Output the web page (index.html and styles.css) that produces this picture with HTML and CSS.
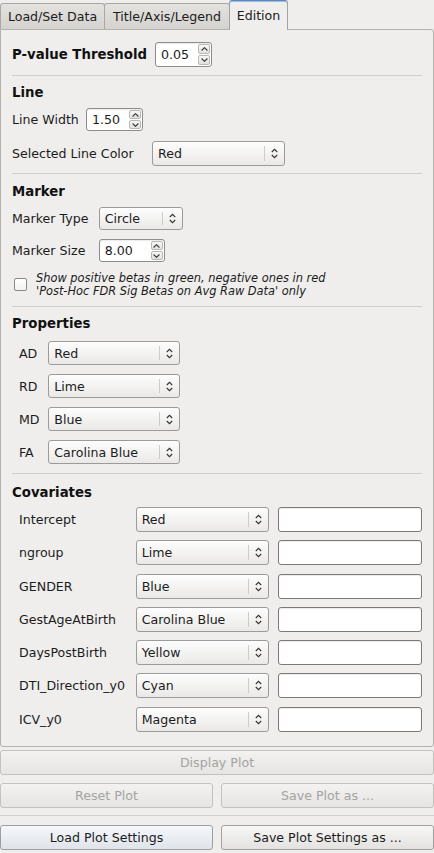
FILE: index.html
```html
<!DOCTYPE html>
<html>
<head>
<meta charset="utf-8">
<link rel="stylesheet" href="styles.css">
</head>
<body>
<div class="tabbar">
  <div class="tab tab-load">Load/Set Data</div>
  <div class="tab tab-title">Title/Axis/Legend</div>
  <div class="tab tab-edition active">Edition</div>
</div>
<div class="pane">
  <div class="row row-pval">
    <span class="bold lbl-pval">P-value Threshold</span>
    <div class="spin spin-pval">
      <span class="spin-text">0.05</span>
      <span class="spin-btns">
        <span class="spin-btn"><svg width="7" height="4" viewBox="0 0 7 4"><path d="M0.6 3.5 L3.5 0.7 L6.4 3.5" fill="none" stroke="#333" stroke-width="1.1"/></svg></span>
        <span class="spin-btn"><svg width="7" height="4" viewBox="0 0 7 4"><path d="M0.6 0.5 L3.5 3.3 L6.4 0.5" fill="none" stroke="#333" stroke-width="1.1"/></svg></span>
      </span>
    </div>
  </div>
  <div class="sep sep-a"></div>

  <div class="bold title title-line">Line</div>
  <div class="row row-lw">
    <span class="lbl lbl-lw">Line Width</span>
    <div class="spin spin-lw">
      <span class="spin-text">1.50</span>
      <span class="spin-btns">
        <span class="spin-btn"><svg width="7" height="4" viewBox="0 0 7 4"><path d="M0.6 3.5 L3.5 0.7 L6.4 3.5" fill="none" stroke="#333" stroke-width="1.1"/></svg></span>
        <span class="spin-btn"><svg width="7" height="4" viewBox="0 0 7 4"><path d="M0.6 0.5 L3.5 3.3 L6.4 0.5" fill="none" stroke="#333" stroke-width="1.1"/></svg></span>
      </span>
    </div>
  </div>
  <div class="row row-slc">
    <span class="lbl lbl-slc">Selected Line Color</span>
    <div class="combo combo-slc"><span class="combo-text">Red</span><span class="combo-arrow"><svg width="7" height="11" viewBox="0 0 7 11"><path d="M0.8 4 L3.5 1.3 L6.2 4 M0.8 7 L3.5 9.7 L6.2 7" fill="none" stroke="#333" stroke-width="1.1"/></svg></span></div>
  </div>
  <div class="sep sep-b"></div>

  <div class="bold title title-marker">Marker</div>
  <div class="row row-mt">
    <span class="lbl lbl-marker">Marker Type</span>
    <div class="combo combo-mt"><span class="combo-text">Circle</span><span class="combo-arrow"><svg width="7" height="11" viewBox="0 0 7 11"><path d="M0.8 4 L3.5 1.3 L6.2 4 M0.8 7 L3.5 9.7 L6.2 7" fill="none" stroke="#333" stroke-width="1.1"/></svg></span></div>
  </div>
  <div class="row row-ms">
    <span class="lbl lbl-marker">Marker Size</span>
    <div class="spin spin-ms">
      <span class="spin-text">8.00</span>
      <span class="spin-btns">
        <span class="spin-btn"><svg width="7" height="4" viewBox="0 0 7 4"><path d="M0.6 3.5 L3.5 0.7 L6.4 3.5" fill="none" stroke="#333" stroke-width="1.1"/></svg></span>
        <span class="spin-btn"><svg width="7" height="4" viewBox="0 0 7 4"><path d="M0.6 0.5 L3.5 3.3 L6.4 0.5" fill="none" stroke="#333" stroke-width="1.1"/></svg></span>
      </span>
    </div>
  </div>
  <div class="check-row">
    <span class="checkbox"></span>
    <div class="check-text">Show positive betas in green, negative ones in red<br>'Post-Hoc FDR Sig Betas on Avg Raw Data' only</div>
  </div>
  <div class="sep sep-c"></div>

  <div class="bold title title-props">Properties</div>
  <div class="prop-list">
    <div class="row prop-row"><span class="lbl lbl-prop">AD</span><div class="combo combo-prop"><span class="combo-text">Red</span><span class="combo-arrow"><svg width="7" height="11" viewBox="0 0 7 11"><path d="M0.8 4 L3.5 1.3 L6.2 4 M0.8 7 L3.5 9.7 L6.2 7" fill="none" stroke="#333" stroke-width="1.1"/></svg></span></div></div>
    <div class="row prop-row"><span class="lbl lbl-prop">RD</span><div class="combo combo-prop"><span class="combo-text">Lime</span><span class="combo-arrow"><svg width="7" height="11" viewBox="0 0 7 11"><path d="M0.8 4 L3.5 1.3 L6.2 4 M0.8 7 L3.5 9.7 L6.2 7" fill="none" stroke="#333" stroke-width="1.1"/></svg></span></div></div>
    <div class="row prop-row"><span class="lbl lbl-prop">MD</span><div class="combo combo-prop"><span class="combo-text">Blue</span><span class="combo-arrow"><svg width="7" height="11" viewBox="0 0 7 11"><path d="M0.8 4 L3.5 1.3 L6.2 4 M0.8 7 L3.5 9.7 L6.2 7" fill="none" stroke="#333" stroke-width="1.1"/></svg></span></div></div>
    <div class="row prop-row"><span class="lbl lbl-prop">FA</span><div class="combo combo-prop"><span class="combo-text">Carolina Blue</span><span class="combo-arrow"><svg width="7" height="11" viewBox="0 0 7 11"><path d="M0.8 4 L3.5 1.3 L6.2 4 M0.8 7 L3.5 9.7 L6.2 7" fill="none" stroke="#333" stroke-width="1.1"/></svg></span></div></div>
  </div>
  <div class="sep sep-d"></div>

  <div class="bold title title-cov">Covariates</div>
  <div class="cov-list">
    <div class="row cov-row"><span class="lbl lbl-cov">Intercept</span><div class="combo combo-cov"><span class="combo-text">Red</span><span class="combo-arrow"><svg width="7" height="11" viewBox="0 0 7 11"><path d="M0.8 4 L3.5 1.3 L6.2 4 M0.8 7 L3.5 9.7 L6.2 7" fill="none" stroke="#333" stroke-width="1.1"/></svg></span></div><div class="lineedit"></div></div>
    <div class="row cov-row"><span class="lbl lbl-cov">ngroup</span><div class="combo combo-cov"><span class="combo-text">Lime</span><span class="combo-arrow"><svg width="7" height="11" viewBox="0 0 7 11"><path d="M0.8 4 L3.5 1.3 L6.2 4 M0.8 7 L3.5 9.7 L6.2 7" fill="none" stroke="#333" stroke-width="1.1"/></svg></span></div><div class="lineedit"></div></div>
    <div class="row cov-row"><span class="lbl lbl-cov">GENDER</span><div class="combo combo-cov"><span class="combo-text">Blue</span><span class="combo-arrow"><svg width="7" height="11" viewBox="0 0 7 11"><path d="M0.8 4 L3.5 1.3 L6.2 4 M0.8 7 L3.5 9.7 L6.2 7" fill="none" stroke="#333" stroke-width="1.1"/></svg></span></div><div class="lineedit"></div></div>
    <div class="row cov-row"><span class="lbl lbl-cov">GestAgeAtBirth</span><div class="combo combo-cov"><span class="combo-text">Carolina Blue</span><span class="combo-arrow"><svg width="7" height="11" viewBox="0 0 7 11"><path d="M0.8 4 L3.5 1.3 L6.2 4 M0.8 7 L3.5 9.7 L6.2 7" fill="none" stroke="#333" stroke-width="1.1"/></svg></span></div><div class="lineedit"></div></div>
    <div class="row cov-row"><span class="lbl lbl-cov">DaysPostBirth</span><div class="combo combo-cov"><span class="combo-text">Yellow</span><span class="combo-arrow"><svg width="7" height="11" viewBox="0 0 7 11"><path d="M0.8 4 L3.5 1.3 L6.2 4 M0.8 7 L3.5 9.7 L6.2 7" fill="none" stroke="#333" stroke-width="1.1"/></svg></span></div><div class="lineedit"></div></div>
    <div class="row cov-row"><span class="lbl lbl-cov">DTI_Direction_y0</span><div class="combo combo-cov"><span class="combo-text">Cyan</span><span class="combo-arrow"><svg width="7" height="11" viewBox="0 0 7 11"><path d="M0.8 4 L3.5 1.3 L6.2 4 M0.8 7 L3.5 9.7 L6.2 7" fill="none" stroke="#333" stroke-width="1.1"/></svg></span></div><div class="lineedit"></div></div>
    <div class="row cov-row"><span class="lbl lbl-cov">ICV_y0</span><div class="combo combo-cov"><span class="combo-text">Magenta</span><span class="combo-arrow"><svg width="7" height="11" viewBox="0 0 7 11"><path d="M0.8 4 L3.5 1.3 L6.2 4 M0.8 7 L3.5 9.7 L6.2 7" fill="none" stroke="#333" stroke-width="1.1"/></svg></span></div><div class="lineedit"></div></div>
  </div>
</div>

<div class="actions">
  <div class="btn disabled btn-display">Display Plot</div>
  <div class="btn-pair pair-plot">
    <div class="btn disabled">Reset Plot</div>
    <div class="btn disabled">Save Plot as ...</div>
  </div>
  <div class="hsep"></div>
  <div class="btn-pair pair-settings">
    <div class="btn focus">Load Plot Settings</div>
    <div class="btn">Save Plot Settings as ...</div>
  </div>
</div>
</body>
</html>
```

FILE: styles.css
```css
html, body {
  margin: 0;
  padding: 0;
}
body {
  width: 434px;
  height: 853px;
  overflow: hidden;
  background: #efeeec;
  font-family: "DejaVu Sans", "Bitstream Vera Sans", sans-serif;
  font-size: 12.6px;
  color: #1c1c1c;
}

/* ---------- tabs ---------- */
.tabbar {
  display: flex;
  align-items: flex-end;
  height: 29px;
  position: relative;
  z-index: 2;
}
.tab {
  box-sizing: border-box;
  height: 26px;
  display: flex;
  align-items: center;
  justify-content: center;
  border: 1px solid #a9a8a6;
  border-bottom: none;
  border-radius: 3px 3px 0 0;
  background: linear-gradient(#e4e2df, #d5d3d0);
  color: #1c1c1c;
  white-space: nowrap;
}
.tab-load { width: 105px; }
.tab-title { width: 126px; margin-left: -1px; }
.tab-edition { width: 59px; margin-left: -1px; }
.tab.active {
  height: 30px;
  margin-bottom: -1px;
  background: #efeeec;
  border-color: #a0a4aa;
  border-top: 1px solid #5a87bd;
  box-shadow: inset 0 1px 0 #9fbde0;
  padding-bottom: 1px;
}

/* ---------- pane ---------- */
.pane {
  box-sizing: border-box;
  height: 718px;
  border: 1px solid #b3b2af;
  border-radius: 0 3px 3px 3px;
  padding: 0 10px 0 11px;
  background: #efeeec;
  display: flex;
  flex-direction: column;
}
.row {
  display: flex;
  align-items: center;
  flex: none;
}
.bold {
  font-weight: bold;
  font-size: 13.3px;
  color: #111;
}
.title {
  height: 16px;
  line-height: 16px;
  flex: none;
}
.lbl {
  flex: none;
  white-space: nowrap;
}
.sep {
  flex: none;
  height: 1px;
  background: #cfcecb;
  margin-right: 1px;
}

/* vertical rhythm */
.row-pval { margin-top: 12px; height: 25px; }
.sep-a { margin-top: 8px; }
.title-line { margin-top: 9px; }
.row-lw { margin-top: 7px; height: 23px; }
.row-slc { margin-top: 10px; height: 25px; }
.sep-b { margin-top: 7px; }
.title-marker { margin-top: 10px; }
.row-mt { margin-top: 7px; height: 23px; }
.row-ms { margin-top: 9px; height: 23px; }
.check-row { margin-top: 10px; }
.sep-c { margin-top: 8px; }
.title-props { margin-top: 9px; }
.sep-d { margin-top: 9px; }
.title-cov { margin-top: 11px; }

/* label columns */
.lbl-pval { width: 143px; flex: none; white-space: nowrap; }
.lbl-lw { width: 74px; }
.lbl-slc { width: 140px; }
.lbl-marker { width: 86.7px; }

/* ---------- spin boxes ---------- */
.spin {
  box-sizing: border-box;
  height: 100%;
  display: flex;
  border: 1px solid #8d8d8b;
  border-radius: 3px;
  background: #fff;
  box-shadow: inset 0 1px 1px rgba(0,0,0,0.08);
}
.spin-pval { width: 57px; }
.spin-lw { width: 57px; }
.spin-ms { width: 66px; }
.spin-text {
  flex: 1;
  display: flex;
  align-items: center;
  padding-left: 5px;
}
.spin-btns {
  width: 13px;
  display: flex;
  flex-direction: column;
  gap: 1px;
  padding: 1px 1px 1px 0;
  box-sizing: border-box;
}
.spin-btn {
  flex: 1;
  display: flex;
  align-items: center;
  justify-content: center;
  border: 1px solid #b9b8b5;
  border-radius: 2px;
  background: linear-gradient(#f8f8f7, #e2e1df);
}

/* ---------- combo boxes ---------- */
.combo {
  box-sizing: border-box;
  height: 100%;
  display: flex;
  align-items: stretch;
  border: 1px solid #9c9b99;
  border-radius: 3px;
  background: linear-gradient(#fdfdfd, #eae9e7);
}
.combo-text {
  flex: 1;
  display: flex;
  align-items: center;
  padding-left: 5px;
  white-space: nowrap;
}
.combo-arrow {
  width: 19px;
  margin: 4px 0;
  border-left: 1px solid #cdccc9;
  display: flex;
  align-items: center;
  justify-content: center;
}
.combo-slc { width: 133px; }
.combo-mt { width: 84px; }

/* ---------- checkbox ---------- */
.check-row {
  display: flex;
  align-items: center;
  padding-left: 2px;
  flex: none;
}
.checkbox {
  box-sizing: border-box;
  width: 13px;
  height: 13px;
  border: 1px solid #8a8987;
  border-radius: 2px;
  background: linear-gradient(#fff, #f2f2f1);
  flex: none;
  margin-right: 9px;
  margin-top: -1px;
}
.check-text {
  font-style: italic;
  font-size: 11.4px;
  line-height: 13px;
  color: #1c1c1c;
  white-space: nowrap;
}

/* ---------- properties ---------- */
.prop-list {
  display: flex;
  flex-direction: column;
  flex: none;
}
.prop-row {
  height: 24px;
  margin-top: 9px;
  padding-left: 7px;
}
.lbl-prop { width: 29.3px; }
.combo-prop { width: 132px; }

/* ---------- covariates ---------- */
.cov-list {
  display: flex;
  flex-direction: column;
  flex: none;
  margin-top: 6px;
  gap: 8.3px;
}
.cov-row {
  height: 25px;
  padding-left: 7px;
}
.lbl-cov { width: 116.7px; }
.combo-cov { width: 133px; }
.lineedit {
  box-sizing: border-box;
  width: 144px;
  height: 100%;
  margin-left: 9px;
  border: 1px solid #7b7a78;
  border-radius: 3px;
  background: #fff;
  box-shadow: inset 0 1px 1px rgba(0,0,0,0.08);
}

/* ---------- bottom buttons ---------- */
.actions {
  display: flex;
  flex-direction: column;
}
.btn {
  box-sizing: border-box;
  height: 25px;
  display: flex;
  align-items: center;
  justify-content: center;
  border: 1px solid #a2a19f;
  border-radius: 3px;
  background: linear-gradient(#f7f7f6, #e3e2e0);
  color: #1c1c1c;
  white-space: nowrap;
}
.btn.disabled {
  color: #a4a3a1;
  border-color: #c3c2bf;
  background: linear-gradient(#f3f2f1, #e6e5e3);
}
.btn.focus {
  border-color: #9aa0a8;
  background: linear-gradient(#f5f7fa, #dfe4ea);
}
.btn-display { margin-top: 3px; }
.btn-pair {
  display: grid;
  grid-template-columns: 1fr 1fr;
  column-gap: 8px;
}
.pair-plot { margin-top: 8px; }
.hsep {
  height: 1px;
  background: #cfcecb;
  margin-top: 7px;
}
.pair-settings { margin-top: 9px; }
```
